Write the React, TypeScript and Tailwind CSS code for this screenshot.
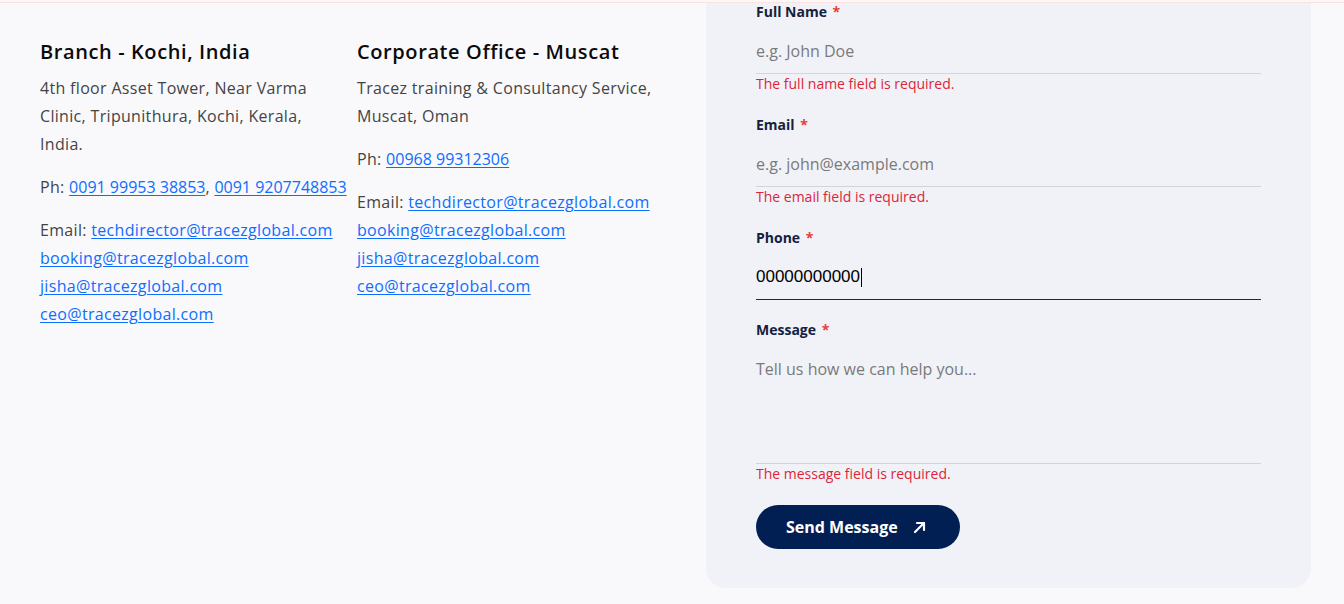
import React from "react";

const font = { fontFamily: "'Open Sans', Lato, sans-serif" };

function Label({ children }: { children: React.ReactNode }) {
  return (
    <label className="block text-[14px] leading-[18px] font-bold text-[#14213d]">
      {children} <span className="text-[#e53e3e] ml-[2px]">*</span>
    </label>
  );
}

function ErrorText({ children }: { children: React.ReactNode }) {
  return <p className="text-[14px] leading-5 text-[#dc2638]">{children}</p>;
}

const link = "text-[#0d6efd] underline underline-offset-2";
const numLink = "text-[#0d6efd] underline underline-offset-2 tracking-normal";
const para = "text-[16px] leading-7 text-[#444] tracking-[0.02em]";
const head = "text-[20px] leading-7 font-semibold text-[#0a0a0a] mb-2 tracking-[0.03em]";

export default function App() {
  return (
    <div className="min-h-[604px] w-full bg-[#f9f9fc]" style={font}>
      <div className="h-[2px]" />
      <div className="h-px bg-[#fde3dc]" />
      <div className="flex">
        <div className="flex-1 pl-10 pt-[35px]">
          <div className="grid grid-cols-[317px_317px]">
            <div>
              <h3 className={head}>Branch - Kochi, India</h3>
              <p className={`${para} mb-[15px] whitespace-nowrap`}>
                4th floor Asset Tower, Near Varma
                <br />
                Clinic, Tripunithura, Kochi, Kerala,
                <br />
                India.
              </p>
              <p className={`${para} mb-[15px] whitespace-nowrap`}>
                Ph: <a href="#" className={numLink}>0091 99953 38853</a>,{" "}
                <a href="#" className={numLink}>0091 9207748853</a>
              </p>
              <p className={`${para} whitespace-nowrap`}>
                Email: <a href="#" className={link}>techdirector@tracezglobal.com</a>
                <br />
                <a href="#" className={link}>booking@tracezglobal.com</a>
                <br />
                <a href="#" className={link}>jisha@tracezglobal.com</a>
                <br />
                <a href="#" className={link}>ceo@tracezglobal.com</a>
              </p>
            </div>
            <div>
              <h3 className={head}>Corporate Office - Muscat</h3>
              <p className={`${para} mb-[15px] whitespace-nowrap`}>
                Tracez training &amp; Consultancy Service,
                <br />
                Muscat, Oman
              </p>
              <p className={`${para} mb-[15px]`}>
                Ph: <a href="#" className={numLink}>00968 99312306</a>
              </p>
              <p className={`${para} whitespace-nowrap`}>
                Email: <a href="#" className={link}>techdirector@tracezglobal.com</a>
                <br />
                <a href="#" className={link}>booking@tracezglobal.com</a>
                <br />
                <a href="#" className={link}>jisha@tracezglobal.com</a>
                <br />
                <a href="#" className={link}>ceo@tracezglobal.com</a>
              </p>
            </div>
          </div>
        </div>
        <div className="w-[605px] mr-[33px] bg-[#f1f2f7] rounded-b-[20px] px-[50px] pb-[39px]">
          <div>
            <Label>Full Name</Label>
            <div className="mt-2 h-[45px] flex items-center border-b border-[#cfd4de] text-[16px] text-[#7a7a7a]">
              e.g. John Doe
            </div>
            <ErrorText>The full name field is required.</ErrorText>
          </div>
          <div className="mt-[22px]">
            <Label>Email</Label>
            <div className="mt-2 h-[45px] flex items-center border-b border-[#cfd4de] text-[16px] text-[#7a7a7a]">
              e.g. john@example.com
            </div>
            <ErrorText>The email field is required.</ErrorText>
          </div>
          <div className="mt-[22px]">
            <Label>Phone</Label>
            <div
              className="mt-2 h-[45px] flex items-center border-b border-[#1b2a4a] text-[17px] text-black"
              style={{ fontFamily: "'Liberation Sans', Arial, sans-serif" }}
            >
              00000000000<span className="inline-block w-px h-[19px] bg-black ml-px" />
            </div>
          </div>
          <div className="mt-[21px]">
            <Label>Message</Label>
            <div className="mt-2 h-[117px] pt-[10px] border-b border-[#cfd4de] text-[16px] leading-6 text-[#7a7a7a]">
              Tell us how we can help you...
            </div>
            <ErrorText>The message field is required.</ErrorText>
          </div>
          <button className="mt-[21px] h-11 w-[204px] rounded-full bg-[#021f54] text-white text-[16px] font-bold flex items-center pl-[30px] gap-[15px]">
            Send Message
            <svg width="13" height="13" viewBox="0 0 13 13" fill="none" stroke="white" strokeWidth="2.2" strokeLinecap="round" strokeLinejoin="round">
              <path d="M2 11 L11 2" />
              <path d="M4 2 H11 V9" />
            </svg>
          </button>
        </div>
      </div>
    </div>
  );
}
